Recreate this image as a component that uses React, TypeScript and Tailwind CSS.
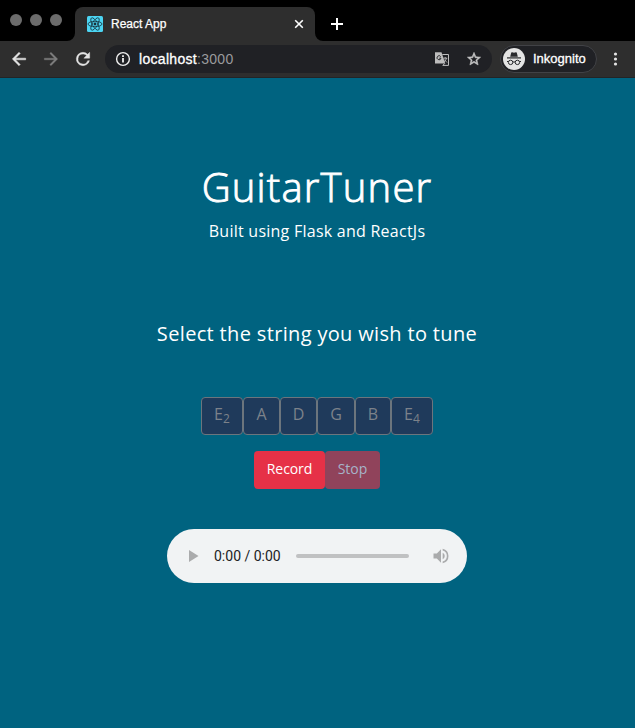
const notes = [
  { name: 'E', sub: '2', box: 'w-[42px]' },
  { name: 'A', box: 'w-[37px]' },
  { name: 'D', box: 'w-[37px]' },
  { name: 'G', box: 'w-[38px]' },
  { name: 'B', box: 'w-[36px]' },
  { name: 'E', sub: '4', box: 'w-[42px]' },
];

function ReactLogo() {
  return (
    <svg className="h-4 w-4 shrink-0" viewBox="0 0 16 16" fill="none" stroke="#17303a" strokeWidth="0.8">
      <rect width="16" height="16" rx="1.5" fill="#4cd5f3" stroke="none" />
      <ellipse cx="8" cy="8" rx="7" ry="2.7" />
      <ellipse cx="8" cy="8" rx="7" ry="2.7" transform="rotate(60 8 8)" />
      <ellipse cx="8" cy="8" rx="7" ry="2.7" transform="rotate(120 8 8)" />
      <circle cx="8" cy="8" r="1.4" fill="#17303a" stroke="none" />
    </svg>
  );
}

function TabStrip() {
  return (
    <div className="flex h-[41px] bg-black">
      <div className="flex w-[75px] gap-2 pl-[10px] pt-[14px]">
        <span className="h-3 w-3 rounded-full bg-[#6c6c6c]" />
        <span className="h-3 w-3 rounded-full bg-[#6c6c6c]" />
        <span className="h-3 w-3 rounded-full bg-[#6c6c6c]" />
      </div>
      <div className="relative mt-[7px] flex h-[34px] w-[240px] items-center rounded-t-lg bg-[#2e2e2e] pl-3 pr-[11px]">
        <svg className="absolute -left-2 bottom-0 h-2 w-2" viewBox="0 0 8 8"><path d="M8 0v8H0a8 8 0 0 0 8-8z" fill="#2e2e2e" /></svg>
        <svg className="absolute -right-2 bottom-0 h-2 w-2" viewBox="0 0 8 8"><path d="M0 0v8h8a8 8 0 0 1-8-8z" fill="#2e2e2e" /></svg>
        <ReactLogo />
        <span className="ml-2 flex-1 text-[12px] leading-4 text-white [-webkit-text-stroke:0.25px_white]">React App</span>
        <svg className="h-[10px] w-[10px]" viewBox="0 0 10 10" stroke="#fff" strokeWidth="1.6"><path d="M1.2 1.2l7.6 7.6M8.800 1.2L1.2 8.800" /></svg>
      </div>
      <svg className="ml-4 mt-[18px] h-3 w-3" viewBox="0 0 12 12" stroke="#fff" strokeWidth="2"><path d="M6 0v12M0 6h12" /></svg>
    </div>
  );
}

function Toolbar() {
  return (
    <div className="flex h-[37px] items-center border-b border-[#232426] bg-[#2e2e2e]">
      <svg className="ml-[9px] h-5 w-5" viewBox="0 0 24 24" fill="#e4e4e4"><path d="M20 11H7.830l5.590-5.590L12 4l-8 8 8 8 1.410-1.410L7.830 13H20v-2z" stroke="#e4e4e4" strokeWidth="0.6" /></svg>
      <svg className="ml-3 h-5 w-5" viewBox="0 0 24 24" fill="#7e7e7e"><path d="M12 4l-1.410 1.410L16.170 11H4v2h12.170l-5.580 5.590L12 20l8-8z" stroke="#7e7e7e" strokeWidth="0.4" /></svg>
      <svg className="ml-3 h-5 w-5" viewBox="0 0 24 24" fill="#e4e4e4"><path d="M17.650 6.350A7.958 7.958 0 0 0 12 4a8 8 0 1 0 7.730 10h-2.080A6 6 0 1 1 12 6c1.660 0 3.140.69 4.220 1.780L13 11h7V4l-2.350 2.350z" stroke="#e4e4e4" strokeWidth="0.5" /></svg>
      <div className="ml-3 flex h-7 w-[387px] items-center rounded-full bg-[#202125] pl-[10px] pr-[10px]">
        <svg className="h-4 w-4" viewBox="0 0 16 16" fill="none" stroke="#f0f0f0" strokeWidth="1.4"><circle cx="8" cy="8" r="6.4" /><path d="M8 7v4.400M8 4.200v1.700" strokeWidth="1.8" /></svg>
        <span className="ml-2 flex-1 text-[14px] leading-5 tracking-[0.3px] text-[#9a9b9d]"><span className="text-white [-webkit-text-stroke:0.3px_white]">localhost</span>:3000</span>
        <svg className="h-4 w-4" viewBox="0 0 16 16">
          <path d="M1 1.200h6.500l3.700 11.300H1z" fill="#bdbdbd" />
          <path d="M8.300 3.500h6.200v10.900H8.800l2-2" fill="none" stroke="#bdbdbd" strokeWidth="1" />
          <path d="M6.700 5.600a2 2 0 1 0 .3 1.600H5.200" fill="none" stroke="#292a2d" strokeWidth="1" />
          <path d="M9.300 7.200h4M11.200 6v1.200M12.500 7.200c-.4 1.700-1.300 2.800-2.400 3.700M10.200 8.500l2.800 3" fill="none" stroke="#bdbdbd" strokeWidth=".9" />
        </svg>
        <svg className="ml-4 h-4 w-4" viewBox="0 0 24 24" fill="#c6c6c6"><path d="M22 9.240l-7.190-.62L12 2 9.190 8.630 2 9.240l5.460 4.730L5.820 21 12 17.270 18.180 21l-1.630-7.030L22 9.240zM12 15.400l-3.760 2.270 1-4.280-3.320-2.880 4.380-.38L12 6.100l1.710 4.040 4.380.38-3.320 2.880 1 4.280L12 15.400z" stroke="#c6c6c6" strokeWidth=".8" /></svg>
      </div>
      <div className="ml-2 flex h-[28px] w-[97px] items-center rounded-full border border-[#414246] bg-[#202125] pl-[2px]">
        <svg className="h-[22px] w-[22px] shrink-0" viewBox="0 0 22 22">
          <circle cx="11" cy="11" r="11" fill="#e4e4e4" />
          <path d="M7.200 8.800l1-4.100q.2-.7.900-.5l1.900.5 1.900-.5q.7-.2.900.5l1 4.100z" fill="#292a2d" />
          <path d="M4 9.900h14" stroke="#292a2d" strokeWidth="1.200" />
          <g fill="none" stroke="#292a2d" strokeWidth="1"><circle cx="7.600" cy="14.400" r="2.200" /><circle cx="14.400" cy="14.400" r="2.200" /><path d="M9.800 14.200q1.200-.8 2.400 0M4 13.500h1.500M16.500 13.500H18" /></g>
        </svg>
        <span className="ml-2 text-[13px] leading-4 text-white [-webkit-text-stroke:0.3px_white]">Inkognito</span>
      </div>
      <svg className="ml-4 h-4 w-[5px]" viewBox="0 0 5 16" fill="#e4e4e4"><circle cx="2.500" cy="3" r="1.600" /><circle cx="2.500" cy="8" r="1.600" /><circle cx="2.500" cy="13" r="1.600" /></svg>
    </div>
  );
}

function AudioPlayer() {
  return (
    <div className="mt-10 flex h-[54px] w-[300px] items-center rounded-full bg-[#f1f3f4]">
      <svg className="ml-[22px] h-3 w-[10px]" viewBox="0 0 10 12" fill="#aaabac"><path d="M0 0v12l9.500-6z" /></svg>
      <span className="ml-[15px] w-[67px] whitespace-nowrap font-[Roboto,sans-serif] text-[14px] leading-5 text-[#202124]">0:00 / 0:00</span>
      <span className="ml-[15px] h-1 w-[113px] rounded-full bg-[#c0c1c2]" />
      <svg className="ml-[22px] h-5 w-5" viewBox="0 0 24 24" fill="#aaabac"><path d="M3 9v6h4l5 5V4L7 9H3zm13.500 3A4.500 4.500 0 0 0 14 7.970v8.050A4.480 4.480 0 0 0 16.500 12zM14 3.230v2.060a7 7 0 0 1 0 13.420v2.060a9 9 0 0 0 0-17.540z" /></svg>
    </div>
  );
}

export default function App() {
  return (
    <div className="flex h-[728px] w-[635px] flex-col overflow-hidden bg-[#006380] font-['Liberation_Sans',sans-serif]">
      <TabStrip />
      <Toolbar />
      <main className="flex flex-1 flex-col items-center bg-[#006380] pr-px font-['Open_Sans',sans-serif] text-white">
        <h1 className="mt-[84px] text-[40px] font-light leading-[50px] tracking-[1.2px] [-webkit-text-stroke:0.9px_white]">GuitarTuner</h1>
        <p className="mt-[7px] text-[16px] leading-6 tracking-[0.25px]">Built using Flask and ReactJs</p>
        <h2 className="mt-[75px] text-[20px] leading-8 tracking-[0.34px]">Select the string you wish to tune</h2>
        <div className="mt-[47px] flex">
          {notes.map((note, i) => (
            <button key={i} className={`${note.box} h-[38px] rounded-[4px] border border-[#6c757d] bg-[#1f3a5b] pb-1 text-[16px] leading-6 text-[#7c828a]`}>
              {note.name}
              {note.sub && <sub className="text-[12px]">{note.sub}</sub>}
            </button>
          ))}
        </div>
        <div className="mt-4 flex">
          <button className="h-[38px] w-[71px] rounded-[4px] bg-[#e63147] pb-1 text-[14px] tracking-[-0.1px]">Record</button>
          <button className="h-[38px] w-[55px] rounded-[4px] bg-[#90435b] pb-1 text-[14px] text-[#a6b4c9]">Stop</button>
        </div>
        <AudioPlayer />
      </main>
    </div>
  );
}
